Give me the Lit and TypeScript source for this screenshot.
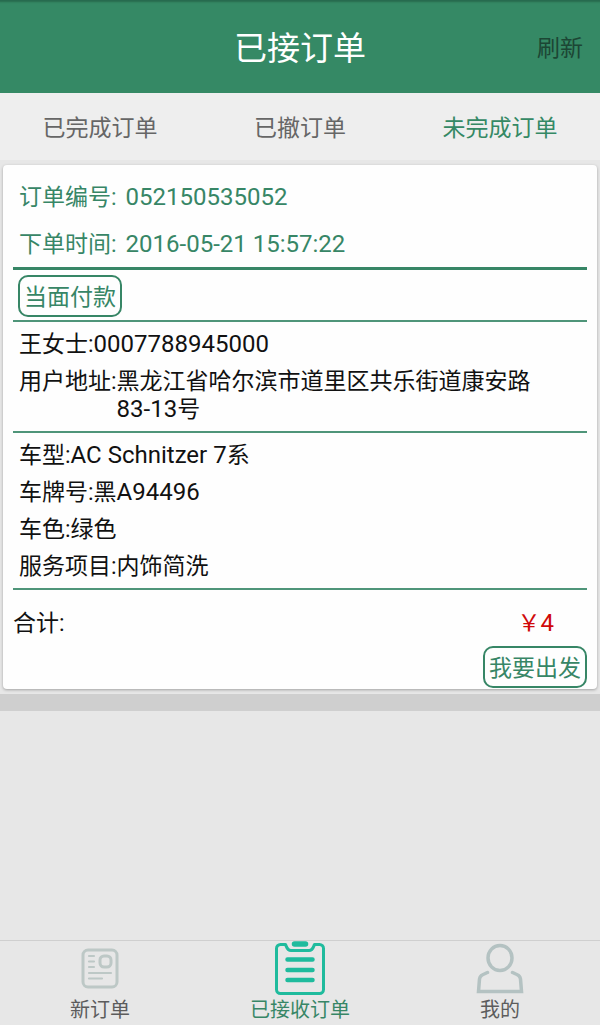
import { LitElement, html, css, svg } from "lit";
import { customElement, property, state } from "lit/decorators.js";

const newIcon = svg`
  <svg class="icon" viewBox="0 0 54 54" fill="none" stroke="#bdc8c6" stroke-width="3" stroke-linecap="round">
    <rect x="10" y="9" width="34" height="37" rx="5"></rect>
    <rect x="27" y="15" width="11" height="11" rx="4"></rect>
    <path d="M16 15h5M16 20.5h5M16 26h5M16 32h22M16 37.500h13" stroke-width="2.200"></path>
  </svg>`;

const takenIcon = svg`
  <svg class="icon" viewBox="0 0 54 54" fill="none" stroke="#1fbb9d" stroke-linecap="round" stroke-linejoin="round">
    <path stroke-width="3" d="M12.500 3.500H7.500a4 4 0 0 0-4 4V48.500a4 4 0 0 0 4 4H46.500a4 4 0 0 0 4-4V7.500a4 4 0 0 0-4-4H41.500C40.500 5.500 40 9.500 36 9.500H18C14 9.500 13.500 5.500 12.500 3.500Z"></path>
    <path stroke-width="5.500" d="M21.500 3h11"></path>
    <path stroke-width="4.500" d="M14.500 18.500h25M14.500 29h25M14.500 39h25"></path>
  </svg>`;

const mineIcon = svg`
  <svg class="icon" viewBox="0 0 54 54" fill="none" stroke="#b4c2c2" stroke-width="3.500" stroke-linecap="round">
    <ellipse cx="27" cy="17" rx="12" ry="12.500"></ellipse>
    <path d="M14.500 31.500C9 34 7 34.500 6.500 38L5.500 50.500H48.500L47.500 38C47 34.500 45 34 39.500 31.500"></path>
  </svg>`;

interface Detail {
  label: string;
  text?: string;
  code?: string;
  tail?: string;
}

@customElement("order-card")
class OrderCard extends LitElement {
  @property() number = "";
  @property() time = "";
  @property() payment = "";
  @property() price = "";
  @property({ attribute: false }) customer: Detail[] = [];
  @property({ attribute: false }) car: Detail[] = [];

  static styles = css`
    :host {
      display: block;
      margin: 5px 3px;
      padding: 8px 10px 1px;
      background: #fefefe;
      border-radius: 4px;
      box-shadow: 0 1px 3px rgba(0, 0, 0, 0.3);
      font-size: 23px;
      color: #111;
    }
    dl, dd {
      margin: 0;
    }
    .head {
      color: #378666;
      border-bottom: 3px solid #378666;
    }
    .row {
      display: flex;
      padding: 5px 6px 4px;
      line-height: 28px;
    }
    .head .row {
      gap: 9px;
      padding: 2px 6px 0;
      line-height: 45px;
    }
    dt {
      flex: none;
    }
    .big {
      font-size: 24px;
    }
    .code {
      font-size: 24px;
      line-height: 20px;
      white-space: nowrap;
    }
    .pay {
      display: flex;
      padding: 5px 5px 3px;
      border-bottom: 2px solid #4f9579;
    }
    .box {
      box-sizing: border-box;
      height: 42px;
      padding: 4px 4px 0;
      border: 2px solid #378666;
      border-radius: 10px;
      background: none;
      color: #378666;
      font: inherit;
      line-height: 34px;
    }
    .group {
      padding: 4px 0 3px;
      border-bottom: 2px solid #4f9579;
    }
    .total {
      display: flex;
      justify-content: space-between;
      padding: 15px 33px 4px 0;
      line-height: 37px;
    }
    .price {
      color: #d00a0a;
    }
    .actions {
      display: flex;
      justify-content: flex-end;
    }
  `;

  private detail(d: Detail) {
    return html`<div class="row">
      <dt>${d.label}:</dt>
      <dd>${d.text}${d.code ? html`<wbr><span class="code">${d.code}</span>` : ""}${d.tail}</dd>
    </div>`;
  }

  render() {
    return html`
      <dl class="head">
        <div class="row"><dt>订单编号:</dt><dd class="big">${this.number}</dd></div>
        <div class="row"><dt>下单时间:</dt><dd class="big">${this.time}</dd></div>
      </dl>
      <div class="pay"><span class="box">${this.payment}</span></div>
      <dl class="group">${this.customer.map((d) => this.detail(d))}</dl>
      <dl class="group">${this.car.map((d) => this.detail(d))}</dl>
      <div class="total"><span>合计:</span><span class="price">${"\uFFE5"}<span class="code">${this.price}</span></span></div>
      <div class="actions"><button class="box" type="button">我要出发</button></div>
    `;
  }
}

@customElement("app-root")
class AppRoot extends LitElement {
  @state() private tab = 2;

  private tabs = ["已完成订单", "已撤订单", "未完成订单"];
  private nav = [
    { label: "新订单", icon: newIcon },
    { label: "已接收订单", icon: takenIcon },
    { label: "我的", icon: mineIcon },
  ];
  private customer: Detail[] = [
    { label: "王女士", code: "0007788945000" },
    { label: "用户地址", text: "黑龙江省哈尔滨市道里区共乐街道康安路", code: "83-13", tail: "号" },
  ];
  private car: Detail[] = [
    { label: "车型", code: "AC Schnitzer 7", tail: "系" },
    { label: "车牌号", text: "黑", code: "A94496" },
    { label: "车色", text: "绿色" },
    { label: "服务项目", text: "内饰简洗" },
  ];

  static styles = css`
    :host {
      display: flex;
      flex-direction: column;
      min-height: 100vh;
      background: #e7e7e7;
      font-family: Roboto, "Noto Sans CJK SC", sans-serif;
      font-size: 23px;
    }
    header {
      display: grid;
      grid-template-columns: 1fr auto 1fr;
      align-items: center;
      height: 93px;
      padding: 0 17px 2px;
      box-sizing: border-box;
      background: #358965;
      box-shadow: inset 0 4px 2px -2px #286a4e;
    }
    h1 {
      grid-column: 2;
      margin: 0;
      color: #fff;
      font-size: 33px;
      font-weight: 400;
    }
    button {
      padding: 0;
      border: 0;
      background: none;
      font: inherit;
      cursor: pointer;
    }
    .refresh {
      justify-self: end;
      color: #1c4634;
    }
    .tabs {
      display: grid;
      grid-template-columns: repeat(3, 1fr);
      height: 67px;
      background: #eee;
    }
    .tab {
      padding-bottom: 1px;
      color: #666;
    }
    .tab.on {
      color: #358965;
    }
    .divider {
      height: 17px;
      background: #cfcfcf;
    }
    .nav {
      display: grid;
      grid-template-columns: repeat(3, 1fr);
      margin-top: auto;
      border-top: 1px solid #cfcfcf;
    }
    .nav a {
      display: flex;
      flex-direction: column;
      align-items: center;
      color: #5c5c5c;
      font-size: 20px;
      line-height: 30px;
      text-decoration: none;
    }
    .nav a.on {
      color: #378666;
    }
    .icon {
      display: block;
      width: 54px;
      height: 54px;
    }
  `;

  render() {
    return html`
      <header>
        <h1>已接订单</h1>
        <button class="refresh" type="button">刷新</button>
      </header>
      <div class="tabs" role="tablist">
        ${this.tabs.map(
          (t, i) => html`<button
            class="tab ${i === this.tab ? "on" : ""}"
            type="button"
            role="tab"
            aria-selected=${i === this.tab}
            @click=${() => (this.tab = i)}
          >${t}</button>`
        )}
      </div>
      <main>
        <order-card
          number="052150535052"
          time="2016-05-21 15:57:22"
          payment="当面付款"
          price="4"
          .customer=${this.customer}
          .car=${this.car}
        ></order-card>
        <div class="divider"></div>
      </main>
      <nav class="nav">
        ${this.nav.map(
          (n, i) => html`<a href="#" class=${i === 1 ? "on" : ""}>${n.icon}<span>${n.label}</span></a>`
        )}
      </nav>
    `;
  }
}
